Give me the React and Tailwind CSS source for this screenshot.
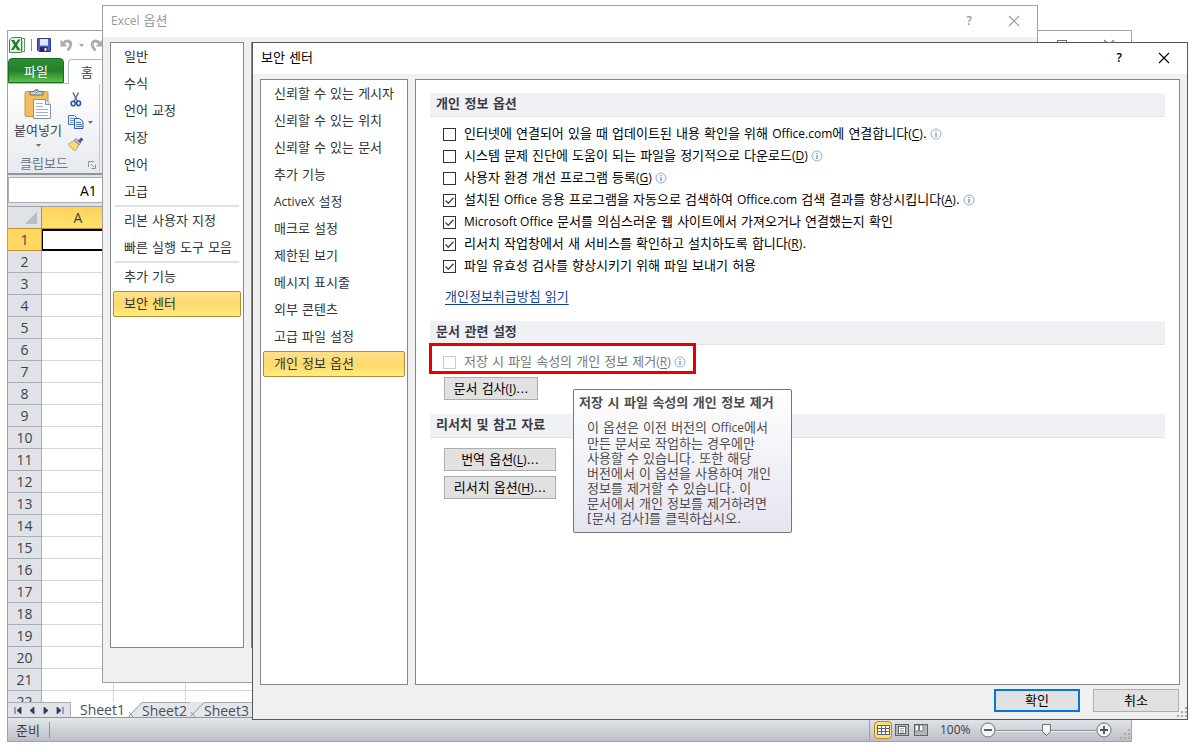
import React from "react";

const BASE_FONT = "font-['Open_Sans','Noto_Sans_CJK_KR',sans-serif]";
const DIALOG_FONT = "font-['DejaVu_Sans','Noto_Sans_CJK_KR',sans-serif]";

function La({ children }) {
  return <span className="text-xs font-['Open_Sans',sans-serif]">{children}</span>;
}

function Key({ k }) {
  return (
    <La>
      (<span className="underline underline-offset-2">{k}</span>)
    </La>
  );
}

function InfoIcon() {
  return (
    <svg viewBox="0 0 12 12" className="size-3 shrink-0" aria-hidden="true">
      <circle cx="6" cy="6" r="5" fill="#f7fafd" stroke="#8fb0d3" />
      <path d="M6 5v4M6 3v1" stroke="#6f87a8" strokeWidth="1.2" />
    </svg>
  );
}

function CloseIcon() {
  return (
    <svg viewBox="0 0 12 12" className="size-3" aria-hidden="true">
      <path d="M1 1l10 10M11 1L1 11" stroke="currentColor" fill="none" strokeWidth="1.1" />
    </svg>
  );
}

/* ---------- Excel window ---------- */

function ExcelLogo() {
  return (
    <svg viewBox="0 0 16 16" className="size-4" aria-hidden="true">
      <rect x="9" y="1.5" width="6.5" height="13" fill="#fff" stroke="#5b9a5f" />
      <path d="M3 .5h9.500v15H.5V3z" fill="#e7f3e6" stroke="#3c8a42" />
      <path d="M13.500 4v9" stroke="#7db37f" strokeDasharray="1.500 1" />
      <path d="M2 3h3.300l1.400 3 2.300-3.500h2.500L8 8l3.600 5.200H8.300L6.600 10l-2 3H2l3.200-5z" fill="#1f7a2c" />
    </svg>
  );
}

function SaveIcon() {
  return (
    <svg viewBox="0 0 14 14" className="size-3.5" aria-hidden="true">
      <path d="M.5.500h13v13H2L.5 12z" fill="#4f5fc0" stroke="#31388c" />
      <rect x="3" y="1" width="8" height="6.500" fill="#dfe8fa" />
      <rect x="3" y="9" width="7.500" height="4.500" fill="#23285f" />
      <rect x="7.500" y="10" width="2" height="3" fill="#dfe4f7" />
    </svg>
  );
}

function UndoIcon({ flip }) {
  return (
    <svg viewBox="0 0 13 14" className={flip ? "w-[13px] h-3.5 -scale-x-100 shrink-0" : "w-[13px] h-3.5 shrink-0"} aria-hidden="true">
      <path d="M3.500 5C7 1.500 11 3 10.800 6.500c-.1 2.500-1.500 4-3.300 6" fill="none" stroke="#a9adb2" strokeWidth="2.800" />
      <path d="M.5 1.500V8.500H7.500z" fill="#a9adb2" />
    </svg>
  );
}

function Caret({ className = "" }) {
  return (
    <svg viewBox="0 0 5 3" className={"w-[5px] h-[3px] shrink-0 " + className} aria-hidden="true">
      <path d="M0 0h5L2.500 3z" fill="currentColor" />
    </svg>
  );
}

function PasteIcon() {
  return (
    <svg viewBox="0 0 28 32" className="w-7 h-8" aria-hidden="true">
      <rect x="1" y="3.500" width="23" height="25" rx="1.500" fill="#f0bd62" stroke="#c99443" />
      <path d="M6 7V3.500h4a2.600 2.600 0 0 1 5 0h4V7z" fill="#c9cdd3" stroke="#696e76" />
      <circle cx="12.500" cy="3.500" r="1.100" fill="#fff" stroke="#555" strokeWidth=".6" />
      <path d="M9.500 11.500h12l5 5v14h-17z" fill="#fff" stroke="#8594ad" />
      <path d="M21.500 11.500v5h5" fill="#dfe7f2" stroke="#8594ad" />
      <path d="M12 15.500h7M12 18.500h7M12 21.500h12M12 24.500h12M12 27.500h12" stroke="#9fb0cb" />
    </svg>
  );
}

function CutIcon() {
  return (
    <svg viewBox="0 0 12 15" className="w-3 h-[15px]" aria-hidden="true">
      <path d="M3 .500l4.500 9M8.500.500L4 9.500" stroke="#5b6f96" strokeWidth="1.500" />
      <ellipse cx="3.200" cy="11.500" rx="2" ry="2.300" fill="none" stroke="#2c56a5" strokeWidth="1.600" />
      <ellipse cx="8.600" cy="11.300" rx="2" ry="2.300" fill="none" stroke="#2c56a5" strokeWidth="1.600" />
    </svg>
  );
}

function CopyIcon() {
  return (
    <svg viewBox="0 0 16 14" className="w-4 h-3.5" aria-hidden="true">
      <path d="M.5.500h6l2 2v7h-8z" fill="#eaf1fb" stroke="#4a6ea9" />
      <path d="M2 3.500h4M2 5.500h4M2 7.500h3" stroke="#6f94cf" />
      <path d="M6.500 3.500h5l3.500 3v7H6.500z" fill="#eaf1fb" stroke="#35579a" />
      <path d="M8 7.500h5M8 9.500h6M8 11.500h6" stroke="#4f7cc4" />
    </svg>
  );
}

function BrushIcon() {
  return (
    <svg viewBox="0 0 16 14" className="w-4 h-3.5" aria-hidden="true">
      <path d="M.5 7L6 3.500 11 8l-3.500 5.500C5 13 2 10.500.5 7z" fill="#f4df80" stroke="#b4933a" strokeWidth=".8" />
      <path d="M6 3.500L8.300 1.500l4.500 4.300L11 8z" fill="#b9bdc9" stroke="#6c7282" strokeWidth=".7" />
      <path d="M9.800 3.800L13.200.400l2.300 2.200-3.500 3.400z" fill="#5b4c9b" />
    </svg>
  );
}

function Grip() {
  return (
    <svg viewBox="0 0 12 12" className="size-3" aria-hidden="true">
      <path d="M9 1h2v2H9zM5 5h2v2H5zM9 5h2v2H9zM1 9h2v2H1zM5 9h2v2H5zM9 9h2v2H9z" fill="#a8abb0" />
    </svg>
  );
}

function Ribbon() {
  return (
    <div>
      <div className="h-7 flex items-center pl-px gap-[5px] text-[#a0a4a9]">
        <ExcelLogo />
        <span className="w-px h-3 bg-[#8b9097] ml-px" />
        <button aria-label="저장"><SaveIcon /></button>
        <div className="flex items-center gap-[6px] pl-1">
          <button aria-label="실행 취소"><UndoIcon /></button>
          <Caret />
          <button aria-label="다시 실행"><UndoIcon flip /></button>
        </div>
      </div>
      <div className="h-[25px] flex items-end border-b border-[#b5bac1]">
        <button className="h-[25px] w-14 rounded-t-sm border border-[#1d6b22] bg-linear-to-b from-[#2f8f35] via-[#237f29] to-[#5fc04b] text-white text-[13px] leading-5">
          파일
        </button>
        <button className="h-[25px] w-[52px] ml-1 -mb-px rounded-t-sm border border-b-0 border-[#b5bac1] bg-white text-[#3b3f47] text-[13px] leading-5 text-left pl-3">
          홈
        </button>
      </div>
      <div className="h-[91px] flex bg-linear-to-b from-white to-[#e6e9ee] border-b-2 border-[#8f959d]">
        <div className="w-[92px] border-r border-[#c6cad0] flex flex-col text-[#3b3f47]">
          <div className="flex h-[70px]">
            <button className="w-[60px] pt-1 flex flex-col items-center text-[13px] leading-5">
              <PasteIcon />
              붙여넣기
              <Caret className="mt-1 text-[#6b6f77]" />
            </button>
            <div className="flex flex-col gap-2 pt-2 items-start">
              <button aria-label="잘라내기" className="pl-0.5"><CutIcon /></button>
              <button aria-label="복사" className="flex items-center gap-1 text-[#6b6f77]"><CopyIcon /><Caret /></button>
              <button aria-label="서식 복사"><BrushIcon /></button>
            </div>
          </div>
          <div className="flex items-center pl-3 text-[13px] leading-5 text-[#6b7686]">
            클립보드
            <svg viewBox="0 0 8 8" className="size-2 ml-5 mt-1" aria-hidden="true">
              <path d="M.5 6V.500H6M3 3l3 3M7.500 3.500v4h-4" fill="none" stroke="#8b9099" />
            </svg>
          </div>
        </div>
      </div>
    </div>
  );
}

const ROWS = Array.from({ length: 22 }, (_, i) => i + 1);
const COLS = Array.from({ length: 14 }, (_, i) => i);

function Sheet() {
  return (
    <div className="flex-1 min-h-0 overflow-hidden">
      <table className="w-full table-fixed border-separate border-spacing-0 text-sm leading-5 text-[#3b3f4a]">
        <thead>
          <tr className="h-[22px]">
            <th className="w-[34px] p-0 bg-[#dfe3e8] border-r border-b border-[#c08f2e]">
              <svg viewBox="0 0 14 14" className="size-3.5 ml-4" aria-hidden="true">
                <path d="M13 1v12H1z" fill="#b9bdc3" />
              </svg>
            </th>
            {COLS.map((c) => (
              <th
                key={c}
                className={
                  c === 0
                    ? "w-[72px] p-0 font-normal bg-linear-to-b from-[#ffd15c] to-[#ffe36e] border-b border-[#c08f2e]"
                    : "w-[72px] p-0 bg-[#dfe3e8] border-b border-r border-[#9fa4ab]"
                }
              >
                {c === 0 ? "A" : null}
              </th>
            ))}
            <th className="p-0 bg-[#dfe3e8] border-b border-[#9fa4ab]" />
          </tr>
        </thead>
        <tbody>
          {ROWS.map((r) => (
            <tr key={r} className="h-[22px]">
              <th
                className={
                  r === 1
                    ? "p-0 font-normal bg-[#ffd65e] border-b border-r border-[#c08f2e]"
                    : "p-0 font-normal bg-[#dfe3e8] border-b border-r border-[#a9aeb5]"
                }
              >
                {r}
              </th>
              {COLS.map((c) => (
                <td
                  key={c}
                  className={
                    r === 1 && c === 0
                      ? "p-0 border-2 border-l border-black"
                      : "p-0 border-b border-r border-[#d4d6d9]"
                  }
                />
              ))}
              <td className="p-0 border-b border-[#d4d6d9]" />
            </tr>
          ))}
        </tbody>
      </table>
    </div>
  );
}

function TabSlope() {
  return (
    <svg viewBox="0 0 14 15" className="w-3.5 h-[15px] shrink-0" aria-hidden="true">
      <path d="M0 15L14 0v15z" fill="#e3e6eb" />
      <path d="M.500 14.500L14 .500M1 10l4 5" stroke="#8f959d" fill="none" />
    </svg>
  );
}

function SheetTabs() {
  const arrows = [
    ["처음", "M1 0v7M7 0v7L3 3.500z"],
    ["이전", "M6 0v7L2 3.500z"],
    ["다음", "M2 0v7l4-3.500z"],
    ["마지막", "M1 0v7l4-3.500zM7 0v7"],
  ];
  return (
    <div className="h-4 flex items-stretch border-b border-[#8f959d] bg-[#e3e6eb] text-sm leading-[15px] text-[#4a4e58]">
      <div className="w-[63px] flex items-center justify-between px-1.5 border-t border-r border-[#a9aeb5] bg-[#dfe3e8]">
        {arrows.map(([label, d]) => (
          <button key={label} aria-label={label}>
            <svg viewBox="0 0 8 7" className="w-2 h-[7px]" aria-hidden="true">
              <path d={d} fill="#2f3d5c" stroke="#2f3d5c" strokeWidth=".8" />
            </svg>
          </button>
        ))}
      </div>
      <button className="bg-white pl-[9px] w-[57px] text-left">Sheet1</button>
      <div className="bg-white"><TabSlope /></div>
      <button className="border-t border-[#a9aeb5] w-12 text-left">Sheet2</button>
      <TabSlope />
      <button className="border-t border-[#a9aeb5] w-14 text-left">Sheet3</button>
    </div>
  );
}

function StatusBar() {
  return (
    <div className="h-[23px] flex items-center bg-linear-to-b from-[#e3e6ea] to-[#bcc0c6] text-[13px] leading-4 text-[#3b3f47]">
      <span className="pl-2 w-[42px] border-r border-[#8f959d]">준비</span>
      <div className="ml-auto flex items-center">
        <span className="w-px h-5 bg-[#9a9fa6] mr-1" />
        <button aria-label="기본" className="size-[18px] grid place-items-center rounded-sm border border-[#b98b2a] bg-[#fbdc7b]">
          <svg viewBox="0 0 13 10" className="w-[13px] h-2.5" aria-hidden="true">
            <rect x=".5" y=".5" width="12" height="9" fill="#fff" stroke="#5f636a" />
            <path d="M4.500 0v10M8.500 0v10M0 3.500h13M0 6.500h13" stroke="#5f636a" />
          </svg>
        </button>
        <button aria-label="페이지 레이아웃" className="ml-[3px]">
          <svg viewBox="0 0 14 12" className="w-3.5 h-3" aria-hidden="true">
            <rect x=".5" y=".5" width="13" height="11" fill="#b4b8be" stroke="#5f636a" />
            <rect x="3.500" y="2.500" width="7" height="7" fill="#fff" stroke="#5f636a" />
            <path d="M5 4.500h4M5 6.500h4M5 8h4" stroke="#8b8f96" strokeWidth=".8" />
          </svg>
        </button>
        <button aria-label="페이지 나누기 미리 보기" className="ml-[5px]">
          <svg viewBox="0 0 14 12" className="w-3.5 h-3" aria-hidden="true">
            <rect x=".5" y=".5" width="13" height="11" fill="#b4b8be" stroke="#5f636a" />
            <path d="M1 1h3.500v6H1zM5.500 1H9v6H5.500z" fill="#fff" stroke="#5f636a" strokeWidth=".8" />
          </svg>
        </button>
        <span className="ml-3 w-10 text-sm leading-4"><La>100%</La></span>
        <button aria-label="축소">
          <svg viewBox="0 0 16 16" className="size-4" aria-hidden="true">
            <circle cx="8" cy="8" r="7" fill="#f3f4f6" stroke="#6d7178" />
            <path d="M4 8h8" stroke="#4c5057" strokeWidth="1.800" />
          </svg>
        </button>
        <div className="grid w-[100px]">
          <svg viewBox="0 0 100 16" className="col-start-1 row-start-1 w-[100px] h-4" aria-hidden="true">
            <path d="M0 8.500h100" stroke="#8b9098" />
            <path d="M0 9.500h100" stroke="#eceef1" />
            <path d="M46.500 2.500h8v7l-4 4-4-4z" fill="#f5f6f8" stroke="#6d7178" />
          </svg>
          <input type="range" min="10" max="190" defaultValue="100" aria-label="확대/축소" className="col-start-1 row-start-1 w-full h-4 opacity-0" />
        </div>
        <button aria-label="확대">
          <svg viewBox="0 0 16 16" className="size-4" aria-hidden="true">
            <circle cx="8" cy="8" r="7" fill="#f3f4f6" stroke="#6d7178" />
            <path d="M4 8h8M8 4v8" stroke="#4c5057" strokeWidth="1.800" />
          </svg>
        </button>
        <span className="ml-[7px] mt-2"><Grip /></span>
      </div>
    </div>
  );
}

function ExcelWindow() {
  return (
    <section aria-label="Excel" className="absolute left-[7px] right-[66px] top-[30px] bottom-[10px] flex flex-col bg-white border border-[#a0a3a8] overflow-hidden">
      <div className="absolute right-4 top-2 flex gap-[36px] text-[#707070]">
        <svg viewBox="0 0 10 10" className="size-2.5 mt-px" aria-hidden="true">
          <rect x=".5" y=".5" width="9" height="9" fill="none" stroke="currentColor" />
        </svg>
        <CloseIcon />
      </div>
      <Ribbon />
      <div className="h-8 pt-0.5 bg-[#dfe3e8] border-b border-[#9fa4ab]">
        <input
          aria-label="이름 상자"
          defaultValue="A1"
          className="block h-[26px] w-40 bg-white border border-[#a9aeb5] pl-[71px] text-sm text-black"
        />
      </div>
      <Sheet />
      <SheetTabs />
      <StatusBar />
    </section>
  );
}

/* ---------- Dialogs ---------- */

function NavItem({ children, selected }) {
  return (
    <button
      className={
        selected
          ? "block w-full h-[26px] mt-px pl-2.5 text-left rounded-xs border border-[#b98b35] bg-linear-to-b from-[#ffe08a] via-[#ffd96f] to-[#ffec7c] text-[13px] leading-[22px] text-[#303338]"
          : "block w-full h-[27px] pl-[11px] text-left text-[13px] leading-[27px] text-[#303338]"
      }
    >
      {children}
    </button>
  );
}

function TitleBar({ title, muted }) {
  return (
    <header
      className={
        muted
          ? "h-[31px] flex items-center bg-white pl-2 pr-[17px] pb-0.5 text-[13px] leading-5 text-[#999]"
          : "h-[31px] flex items-center bg-white pl-2 pr-[17px] pb-0.5 text-[13px] leading-5 text-black"
      }
    >
      <h1>{title}</h1>
      <button aria-label="도움말" className="ml-auto mr-9 font-semibold"><La>?</La></button>
      <button aria-label="닫기"><CloseIcon /></button>
    </header>
  );
}

function OptionsDialog() {
  return (
    <section aria-label="Excel 옵션" className={"absolute left-[102px] right-[160px] top-[5px] bottom-[69px] flex flex-col bg-[#f0f0f0] border border-[#a0a0a0] " + DIALOG_FONT}>
      <TitleBar title={<><La>Excel</La> 옵션</>} muted />
      <div className="flex-1 flex gap-[7px] pt-[5px] px-[7px] pb-[34px]">
        <nav className="w-[134px] bg-white border border-[#828790] px-0.5">
          {["일반", "수식", "언어 교정", "저장", "언어", "고급"].map((t) => (
            <NavItem key={t}>{t}</NavItem>
          ))}
          <div className="h-0.5 mx-0.5 bg-[#e1e2e4]" />
          <NavItem>리본 사용자 지정</NavItem>
          <NavItem>빠른 실행 도구 모음</NavItem>
          <div className="h-0.5 mx-0.5 bg-[#e1e2e4]" />
          <NavItem>추가 기능</NavItem>
          <NavItem selected>보안 센터</NavItem>
        </nav>
        <div className="flex-1 bg-white border border-[#828790]" />
      </div>
    </section>
  );
}

function SectionHead({ children }) {
  return (
    <h2 className="h-6 pl-1.5 bg-[#f0f1f5] border-b border-[#e0e2e8] text-[13px] leading-[22px] font-bold text-[#3b3b3f]">
      {children}
    </h2>
  );
}

function Check({ children, checked, info, disabled }) {
  return (
    <div className="h-[22px] flex items-center">
      <label
        className={
          disabled
            ? "flex items-center gap-2 text-[13px] leading-5 text-[#77777a]"
            : "flex items-center gap-2 text-[13px] leading-5 text-black"
        }
      >
        <span className="grid size-[13px]">
          <input
            type="checkbox"
            defaultChecked={checked}
            disabled={disabled}
            className="peer appearance-none col-start-1 row-start-1 size-[13px] bg-white border border-[#333] disabled:border-[#ccc]"
          />
          <svg viewBox="0 0 13 13" className="col-start-1 row-start-1 size-[13px] invisible peer-checked:visible pointer-events-none" aria-hidden="true">
            <path d="M2.500 6.500l2.800 2.800 5.200-5.500" fill="none" stroke="#444" strokeWidth="1.300" />
          </svg>
        </span>
        <span>{children}</span>
      </label>
      {info && <span className="ml-[3px]"><InfoIcon /></span>}
    </div>
  );
}

function PushButton({ children, className = "" }) {
  return (
    <button className={"h-[23px] bg-[#e1e1e1] border border-[#adadad] text-[13px] leading-5 text-black " + className}>
      {children}
    </button>
  );
}

function Tooltip() {
  return (
    <div
      role="tooltip"
      className="absolute left-[157px] top-[309px] w-[219px] h-36 rounded-xs border border-[#767676] bg-linear-to-b from-white to-[#e4e5f0] px-[5px] pt-1 text-[13px] text-[#4c4c4c]"
    >
      <p className="font-bold leading-[18px] whitespace-nowrap">저장 시 파일 속성의 개인 정보 제거</p>
      <p className="pl-2 pt-2 leading-[15px] whitespace-nowrap">
        이 옵션은 이전 버전의 <La>Office</La>에서<br />
        만든 문서로 작업하는 경우에만<br />
        사용할 수 있습니다. 또한 해당<br />
        버전에서 이 옵션을 사용하여 개인<br />
        정보를 제거할 수 있습니다. 이<br />
        문서에서 개인 정보를 제거하려면<br />
        [문서 검사]를 클릭하십시오.
      </p>
    </div>
  );
}

function TrustCenterDialog() {
  return (
    <section aria-label="보안 센터" className={"absolute left-[252px] right-[10px] top-[42px] bottom-[32px] flex flex-col bg-[#f0f0f0] border border-[#55555a] " + DIALOG_FONT}>
      <TitleBar title="보안 센터" />
      <div className="flex-1 min-h-0 flex gap-[7px] pt-[5px] px-[7px]">
        <nav className="w-[148px] bg-white border border-[#828790] px-0.5">
          {[
            "신뢰할 수 있는 게시자",
            "신뢰할 수 있는 위치",
            "신뢰할 수 있는 문서",
            "추가 기능",
            <><La>ActiveX</La> 설정</>,
            "매크로 설정",
            "제한된 보기",
            "메시지 표시줄",
            "외부 콘텐츠",
            "고급 파일 설정",
          ].map((t, i) => (
            <NavItem key={i}>{t}</NavItem>
          ))}
          <NavItem selected>개인 정보 옵션</NavItem>
        </nav>
        <main className="relative flex-1 bg-white border border-[#828790] px-3.5 pt-[13px]">
          <SectionHead>개인 정보 옵션</SectionHead>
          <div className="pl-[13px] pt-1.5">
            <Check info>인터넷에 연결되어 있을 때 업데이트된 내용 확인을 위해 <La>Office.com</La>에 연결합니다<Key k="C" />.</Check>
            <Check info>시스템 문제 진단에 도움이 되는 파일을 정기적으로 다운로드<Key k="D" /></Check>
            <Check info>사용자 환경 개선 프로그램 등록<Key k="G" /></Check>
            <Check checked info>설치된 <La>Office</La> 응용 프로그램을 자동으로 검색하여 <La>Office.com</La> 검색 결과를 향상시킵니다<Key k="A" />.</Check>
            <Check checked><La>Microsoft Office</La> 문서를 의심스러운 웹 사이트에서 가져오거나 연결했는지 확인</Check>
            <Check checked>리서치 작업창에서 새 서비스를 확인하고 설치하도록 합니다<Key k="R" />.</Check>
            <Check checked>파일 유효성 검사를 향상시키기 위해 파일 보내기 허용</Check>
            <a href="#privacy" className="block w-fit ml-0.5 mt-2.5 mb-3.5 text-[13px] leading-5 text-[#0f3f8c] underline underline-offset-3">
              개인정보취급방침 읽기
            </a>
          </div>
          <SectionHead>문서 관련 설정</SectionHead>
          <div className="w-[267px] h-[31px] -mt-0.5 -ml-px pl-[11px] pt-[5px] flex items-start border-3 border-[#e60000] whitespace-nowrap">
            <Check disabled info>저장 시 파일 속성의 개인 정보 제거<Key k="R" /></Check>
          </div>
          <div className="pl-3.5 pt-[3px] pb-3.5">
            <PushButton className="block w-[94px]">문서 검사<Key k="I" />...</PushButton>
          </div>
          <SectionHead>리서치 및 참고 자료</SectionHead>
          <div className="pl-3.5 pt-2.5 flex flex-col items-start gap-[5px]">
            <PushButton className="w-28">번역 옵션<Key k="L" />...</PushButton>
            <PushButton className="w-28">리서치 옵션<Key k="H" />...</PushButton>
          </div>
          <Tooltip />
        </main>
      </div>
      <footer className="h-[34px] flex items-start justify-end gap-[13px] pt-1 pl-2">
        <button className="w-[86px] h-[23px] bg-[#e1e1e1] border-2 border-[#0078d7] text-[13px] leading-[18px] text-black">확인</button>
        <PushButton className="w-[86px]">취소</PushButton>
        <span className="-ml-4 mt-[17px] -mr-px w-3"><Grip /></span>
      </footer>
    </section>
  );
}

export default function App() {
  return (
    <div className={"relative h-screen min-h-[640px] min-w-[1000px] overflow-hidden bg-white " + BASE_FONT}>
      <ExcelWindow />
      <OptionsDialog />
      <TrustCenterDialog />
    </div>
  );
}
